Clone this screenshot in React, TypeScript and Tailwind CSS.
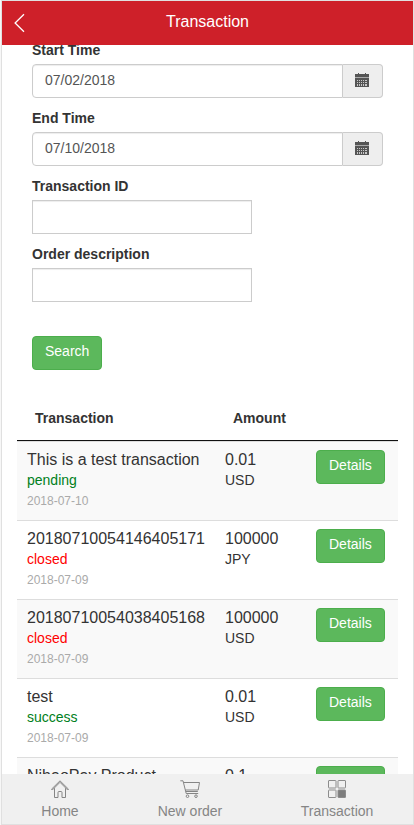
import React from "react";

const transactions = [
  { title: "This is a test transaction", status: "pending", date: "2018-07-10", amount: "0.01", currency: "USD" },
  { title: "20180710054146405171", status: "closed", date: "2018-07-09", amount: "100000", currency: "JPY" },
  { title: "20180710054038405168", status: "closed", date: "2018-07-09", amount: "100000", currency: "USD" },
  { title: "test", status: "success", date: "2018-07-09", amount: "0.01", currency: "USD" },
  { title: "NihaoPay Product", status: "", date: "", amount: "0.1", currency: "" },
];

const CalendarIcon = () => (
  <svg width="14" height="14" viewBox="0 0 14 14" fill="#555" shapeRendering="crispEdges">
    <path d="M3 0h1v1h6V0h1v1h3v3H0V1h3z" />
    <path d="M0 4h14v1H0z" fill="#aaa" />
    <path d="M0 5h14v9H0z" />
    <path
      d="M2 7h1v1H2zM4 7h1v1H4zM6 7h1v1H6zM8 7h1v1H8zM10 7h2v1h-2zM2 9h1v1H2zM4 9h1v1H4zM6 9h1v1H6zM8 9h1v1H8zM10 9h2v1h-2zM2 11h1v2H2zM4 11h1v2H4zM6 11h1v2H6zM8 11h1v2H8zM10 11h2v2h-2z"
      fill="#c8c8c8"
    />
  </svg>
);

const HomeIcon = () => (
  <svg width="18" height="18" viewBox="0 0 18 18" fill="none" stroke="#858585" strokeWidth="1">
    <path d="M.5 9.200 9 .8l8.500 8.400-.8.800L9 2.300 1.300 10z" />
    <path d="M3.500 8.200v9.300h3.500v-5q0-1 1-1h2q1 0 1 1v5h3.500V8.200" />
  </svg>
);

const CartIcon = () => (
  <svg width="20" height="18" viewBox="0 0 20 18" fill="none" stroke="#858585" strokeWidth="1">
    <path d="M.3.800h2.700l3.200 12.700h12" />
    <path d="M3.500 2.500h16l-1.300 7.500H5.300M5.800 11.500h12" />
    <circle cx="7.500" cy="16.200" r="1.300" />
    <circle cx="16" cy="16.200" r="1.300" />
  </svg>
);

const GridIcon = () => (
  <svg width="18" height="18" viewBox="0 0 18 18" fill="none" stroke="#8c8c8c" strokeWidth="1">
    <rect x=".5" y=".5" width="7.500" height="7.500" rx=".5" />
    <rect x="10" y=".5" width="7.500" height="7.500" rx=".5" />
    <rect x=".5" y="10" width="7.500" height="7.500" rx=".5" />
    <rect x="10" y="10" width="7.500" height="7.500" rx=".5" fill="#7d7d7d" />
  </svg>
);

const DateField = ({ label, value }: { label: string; value: string }) => (
  <div className="mb-2.5">
    <label className="block mb-1 font-bold leading-5">{label}</label>
    <div className="flex w-[351px] h-[34px]">
      <div className="flex-1 border border-[#ccc] rounded-l pl-3 pt-[5px] leading-5 text-[#555] shadow-[inset_0_1px_1px_rgba(0,0,0,0.075)]">
        {value}
      </div>
      <div className="w-10 pl-3 pt-2 bg-[#eee] border border-l-0 border-[#ccc] rounded-r">
        <CalendarIcon />
      </div>
    </div>
  </div>
);

const TextField = ({ label }: { label: string }) => (
  <div className="mb-2.5">
    <label className="block mb-1 font-bold leading-5">{label}</label>
    <input
      type="text"
      className="block w-[220px] h-[34px] px-3 bg-white border border-[#ccc] shadow-[inset_0_1px_1px_rgba(0,0,0,0.075)] outline-none"
    />
  </div>
);

const GreenButton = ({ children }: { children: React.ReactNode }) => (
  <button className="block w-fit h-[34px] px-3 pb-1 rounded border border-[#4cae4c] bg-[#5cb85c] text-white leading-5">
    {children}
  </button>
);

const App = () => {
  return (
    <div className="w-[414px] h-[825px] pl-px bg-[#f7f7f7] font-['Liberation_Sans',Arial,sans-serif] text-sm text-[#333]">
      <div className="h-full flex flex-col bg-white border border-[#e0e0e0] overflow-hidden">
        {/* Header */}
        <header className="h-11 shrink-0 grid grid-cols-[40px_1fr_40px] items-center bg-[#ce2029] text-white">
          <svg className="ml-3" width="12" height="20" viewBox="0 0 12 20" fill="none" stroke="#fff" strokeWidth="1.300">
            <path d="M10 1.200 1.100 10l8.900 8.800" />
          </svg>
          <h1 className="text-base text-center leading-6 pb-[3px]">Transaction</h1>
        </header>

        <main className="flex-1 min-h-0 overflow-hidden">
          {/* Search form */}
          <form className="-mt-[5px] ml-[30px]">
            <DateField label="Start Time" value="07/02/2018" />
            <DateField label="End Time" value="07/10/2018" />
            <TextField label="Transaction ID" />
            <TextField label="Order description" />
            <div className="pt-6">
              <GreenButton>Search</GreenButton>
            </div>
          </form>

          {/* Transaction list */}
          <section className="mt-[38px] ml-[15px] w-[381px]">
            <div className="h-[33px] grid grid-cols-[198px_1fr] pl-[18px] border-b border-[#111] font-bold leading-5">
              <span>Transaction</span>
              <span>Amount</span>
            </div>
            {transactions.map((item, i) => (
              <div
                key={i}
                className="h-[79px] grid grid-cols-[198px_91px_1fr] items-start pl-2.5 pt-2 border-t border-[#ddd] odd:bg-white even:bg-[#f9f9f9]"
              >
                <div>
                  <p className="text-base leading-5">{item.title}</p>
                  <p className={item.status === "closed" ? "text-[#f00] leading-5" : "text-[#008020] leading-5"}>
                    {item.status}
                  </p>
                  <p className="text-xs text-[#aaa] leading-[22px]">{item.date}</p>
                </div>
                <div>
                  <p className="text-base leading-5">{item.amount}</p>
                  <p className="leading-5">{item.currency}</p>
                </div>
                <GreenButton>Details</GreenButton>
              </div>
            ))}
          </section>
        </main>

        {/* Bottom navigation */}
        <nav className="h-[50px] shrink-0 flex pt-1.5 bg-[#f0f0f0] text-[#858585]">
          <a href="#" className="w-[116px] flex flex-col items-center gap-[3px] leading-5">
            <HomeIcon />
            <span>Home</span>
          </a>
          <a href="#" className="w-36 flex flex-col items-center gap-[3px] leading-5">
            <CartIcon />
            <span>New order</span>
          </a>
          <a href="#" className="w-[150px] flex flex-col items-center gap-[3px] leading-5">
            <GridIcon />
            <span>Transaction</span>
          </a>
        </nav>
      </div>
    </div>
  );
};

export default App;
